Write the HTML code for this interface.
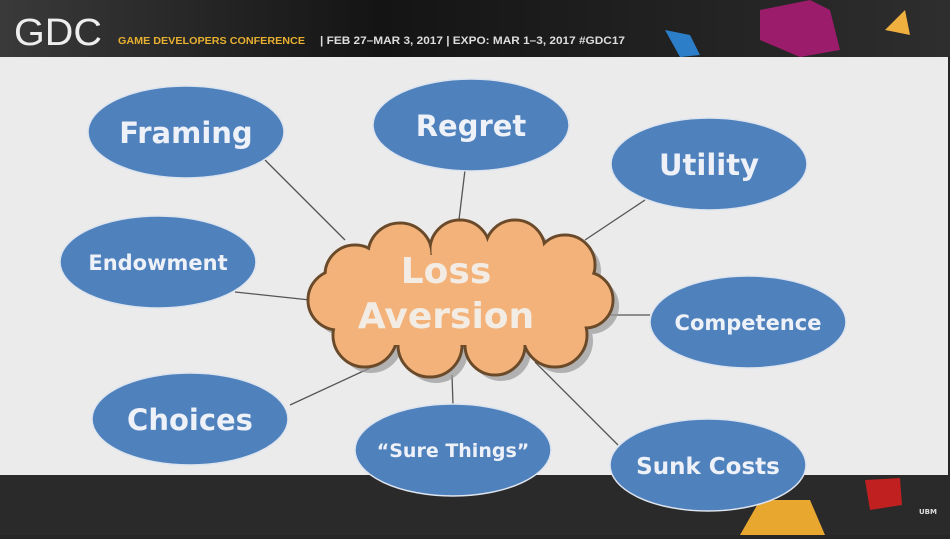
<!DOCTYPE html>
<html><head><meta charset="utf-8"><style>
body{margin:0;width:950px;height:535px;overflow:hidden;background:#262626;font-family:"DejaVu Sans","Liberation Sans",sans-serif}
</style></head><body>
<svg width="950" height="535" viewBox="0 0 950 535" xmlns="http://www.w3.org/2000/svg">
<defs>
<linearGradient id="hd" x1="0" y1="0" x2="1" y2="0"><stop offset="0" stop-color="#3a3a3a"/><stop offset="0.4" stop-color="#141414"/><stop offset="1" stop-color="#2e2e2e"/></linearGradient>
</defs>
<rect width="950" height="57" fill="url(#hd)"/>
<polygon points="760,10 810,0 830,10 840,50 800,57 760,40" fill="#9b1c6a"/>
<polygon points="885,30 905,10 910,35" fill="#f0b040"/>
<polygon points="665,30 690,35 700,55 680,57" fill="#2d7ec9"/>
<text x="14" y="45" font-family="Liberation Sans,sans-serif" font-size="38" fill="#eee" textLength="88" lengthAdjust="spacingAndGlyphs">GDC</text>
<text x="118" y="44" font-size="10" font-weight="bold" fill="#e8b030" font-family="Liberation Sans,sans-serif" textLength="187" lengthAdjust="spacingAndGlyphs">GAME DEVELOPERS CONFERENCE</text>
<text x="320" y="44" font-size="11" font-weight="bold" fill="#ddd" font-family="Liberation Sans,sans-serif" textLength="305" lengthAdjust="spacingAndGlyphs">|  FEB 27–MAR 3, 2017  |  EXPO: MAR 1–3, 2017   #GDC17</text>
<rect x="0" y="475" width="950" height="60" fill="#2a2a2a"/>
<polygon points="740,535 760,500 810,500 825,535" fill="#e8a830"/>
<polygon points="865,480 900,478 902,505 870,510" fill="#c02020"/>
<text x="928" y="514" font-size="7" fill="#ddd" text-anchor="middle" font-weight="bold">UBM</text>
<rect x="0" y="57" width="948" height="418" fill="#ebebeb"/>
<g stroke="#555" stroke-width="1.3">
<line x1="265" y1="160" x2="345" y2="240"/><line x1="465" y1="170" x2="458" y2="228"/>
<line x1="645" y1="200" x2="585" y2="240"/><line x1="235" y1="292" x2="310" y2="300"/>
<line x1="610" y1="315" x2="650" y2="315"/><line x1="290" y1="405" x2="370" y2="368"/>
<line x1="453" y1="405" x2="452" y2="375"/><line x1="618" y1="445" x2="535" y2="362"/>
</g>
<g transform="translate(6,6)" fill="#999" opacity="0.7">
<circle cx="355" cy="275" r="30"/><circle cx="400" cy="255" r="32"/><circle cx="460" cy="250" r="30"/><circle cx="515" cy="250" r="30"/><circle cx="565" cy="265" r="30"/><circle cx="585" cy="300" r="28"/><circle cx="555" cy="335" r="32"/><circle cx="495" cy="345" r="30"/><circle cx="430" cy="345" r="32"/><circle cx="365" cy="335" r="32"/><circle cx="338" cy="300" r="30"/><rect x="350" y="255" width="230" height="90"/>
</g>
<g fill="#f2b27a" stroke="#6b4a2a" stroke-width="3">
<circle cx="355" cy="275" r="30"/><circle cx="400" cy="255" r="32"/><circle cx="460" cy="250" r="30"/><circle cx="515" cy="250" r="30"/><circle cx="565" cy="265" r="30"/><circle cx="585" cy="300" r="28"/><circle cx="555" cy="335" r="32"/><circle cx="495" cy="345" r="30"/><circle cx="430" cy="345" r="32"/><circle cx="365" cy="335" r="32"/><circle cx="338" cy="300" r="30"/>
</g>
<g fill="#f2b27a">
<circle cx="355" cy="275" r="28.5"/><circle cx="400" cy="255" r="30.5"/><circle cx="460" cy="250" r="28.5"/><circle cx="515" cy="250" r="28.5"/><circle cx="565" cy="265" r="28.5"/><circle cx="585" cy="300" r="26.5"/><circle cx="555" cy="335" r="30.5"/><circle cx="495" cy="345" r="28.5"/><circle cx="430" cy="345" r="30.5"/><circle cx="365" cy="335" r="30.5"/><circle cx="338" cy="300" r="28.5"/><rect x="350" y="255" width="230" height="90"/>
</g>
<g fill="#f3ece4" font-weight="bold" text-anchor="middle" font-size="36">
<text x="446" y="283">Loss</text><text x="446" y="328">Aversion</text>
</g>
<g fill="#4f81bd" stroke="#dde4ee" stroke-width="1.5">
<ellipse cx="186" cy="132" rx="98" ry="46"/><ellipse cx="471" cy="125" rx="98" ry="46"/>
<ellipse cx="709" cy="164" rx="98" ry="46"/><ellipse cx="158" cy="262" rx="98" ry="46"/>
<ellipse cx="748" cy="322" rx="98" ry="46"/><ellipse cx="190" cy="419" rx="98" ry="46"/>
<ellipse cx="453" cy="450" rx="98" ry="46"/><ellipse cx="708" cy="465" rx="98" ry="46"/>
</g>
<g fill="#eef2f8" font-weight="bold" text-anchor="middle">
<text x="186" y="143" font-size="29">Framing</text>
<text x="471" y="136" font-size="29">Regret</text>
<text x="709" y="175" font-size="29">Utility</text>
<text x="158" y="270" font-size="21">Endowment</text>
<text x="748" y="330" font-size="21">Competence</text>
<text x="190" y="430" font-size="29">Choices</text>
<text x="453" y="457" font-size="19">“Sure Things”</text>
<text x="708" y="474" font-size="23">Sunk Costs</text>
</g>
</svg>
</body></html>
